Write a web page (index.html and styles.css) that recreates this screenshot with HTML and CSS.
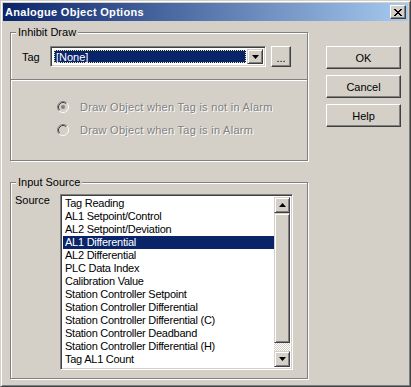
FILE: index.html
```html
<!DOCTYPE html>
<html>
  <head>
    <title>Analogue Object Options</title>
    <link rel="stylesheet" href="styles.css">
  </head>
  <body>
    <div class="window">
      <div class="titlebar">
        <span class="title">Analogue Object Options</span>
        <span class="close-btn">
          <svg width="8" height="7" viewBox="0 0 8 7"><path d="M0 0 L7 7 M1 0 L8 7 M7 0 L0 7 M8 0 L1 7" stroke="#000" stroke-width="1" shape-rendering="crispEdges"/></svg>
        </span>
      </div>

      <div class="dialog">
        <div class="main">
          <!-- Inhibit Draw group -->
          <div class="group group-inhibit">
            <span class="group-label">Inhibit Draw</span>
            <div class="tag-row">
              <span class="tag-label">Tag</span>
              <div class="combo sunken">
                <div class="combo-field"><span class="combo-text">[None]</span></div>
                <div class="combo-arrow raised-alt">
                  <svg width="7" height="4" viewBox="0 0 7 4"><path d="M0 0 H7 L3.5 4 Z" fill="#000"/></svg>
                </div>
              </div>
              <button class="btn btn-browse">...</button>
            </div>
            <div class="separator"></div>
            <div class="radios">
              <div class="radio-row">
                <svg class="radio" width="12" height="12" viewBox="0 0 12 12">
                  <circle cx="6" cy="6" r="4.5" fill="#D4D0C8"/>
                  <path d="M2.11 9.89 A5.5 5.5 0 0 1 9.89 2.11" stroke="#808080" fill="none"/>
                  <path d="M9.89 2.11 A5.5 5.5 0 0 1 2.11 9.89" stroke="#fff" fill="none"/>
                  <path d="M2.82 9.18 A4.5 4.5 0 0 1 9.18 2.82" stroke="#404040" fill="none"/>
                  <path d="M9.18 2.82 A4.5 4.5 0 0 1 2.82 9.18" stroke="#D4D0C8" fill="none"/>
                  <circle cx="6" cy="6" r="2" fill="#808080"/>
                </svg>
                <span>Draw Object when Tag is not in Alarm</span>
              </div>
              <div class="radio-row">
                <svg class="radio" width="12" height="12" viewBox="0 0 12 12">
                  <circle cx="6" cy="6" r="4.5" fill="#D4D0C8"/>
                  <path d="M2.11 9.89 A5.5 5.5 0 0 1 9.89 2.11" stroke="#808080" fill="none"/>
                  <path d="M9.89 2.11 A5.5 5.5 0 0 1 2.11 9.89" stroke="#fff" fill="none"/>
                  <path d="M2.82 9.18 A4.5 4.5 0 0 1 9.18 2.82" stroke="#404040" fill="none"/>
                  <path d="M9.18 2.82 A4.5 4.5 0 0 1 2.82 9.18" stroke="#D4D0C8" fill="none"/>
                </svg>
                <span>Draw Object when Tag is in Alarm</span>
              </div>
            </div>
          </div>

          <!-- Input Source group -->
          <div class="group group-source">
            <span class="group-label">Input Source</span>
            <div class="source-row">
              <span class="source-label">Source</span>
              <div class="listbox sunken">
                <ul class="list-items">
                  <li>Tag Reading</li>
                  <li>AL1 Setpoint/Control</li>
                  <li>AL2 Setpoint/Deviation</li>
                  <li class="selected">AL1 Differential</li>
                  <li>AL2 Differential</li>
                  <li>PLC Data Index</li>
                  <li>Calibration Value</li>
                  <li>Station Controller Setpoint</li>
                  <li>Station Controller Differential</li>
                  <li>Station Controller Differential (C)</li>
                  <li>Station Controller Deadband</li>
                  <li>Station Controller Differential (H)</li>
                  <li>Tag AL1 Count</li>
                  <li>Tag AL2 Count</li>
                </ul>
                <div class="scrollbar">
                  <div class="sb-btn raised-alt">
                    <svg width="7" height="4" viewBox="0 0 7 4"><path d="M0 4 H7 L3.5 0 Z" fill="#000"/></svg>
                  </div>
                  <div class="sb-thumb raised-alt"></div>
                  <div class="sb-track"></div>
                  <div class="sb-btn raised-alt">
                    <svg width="7" height="4" viewBox="0 0 7 4"><path d="M0 0 H7 L3.5 4 Z" fill="#000"/></svg>
                  </div>
                </div>
              </div>
            </div>
          </div>
        </div>

        <div class="actions">
          <button class="btn btn-push">OK</button>
          <button class="btn btn-push">Cancel</button>
          <button class="btn btn-push">Help</button>
        </div>
      </div>
    </div>
  </body>
</html>
```

FILE: styles.css
```css
body {
  margin: 0;
  padding: 0;
  background: #d4d0c8;
}

.window {
  width: 411px;
  height: 387px;
  box-sizing: border-box;
  padding: 2px;
  border: 1px solid;
  border-color: #d4d0c8 #404040 #404040 #d4d0c8;
  box-shadow: inset 1px 1px #fff, inset -1px -1px #808080;
  background: #d4d0c8;
  font-family: "Liberation Sans", Arial, sans-serif;
  font-size: 11px;
  color: #000;
}

/* title bar */
.titlebar {
  height: 18px;
  display: flex;
  align-items: center;
  justify-content: space-between;
  padding: 0 2px;
  background: linear-gradient(to right, #0a246a, #a6caf0);
}

.title {
  color: #fff;
  font-weight: bold;
  font-size: 11px;
  letter-spacing: 0.3px;
}

.close-btn {
  width: 16px;
  height: 14px;
  box-sizing: border-box;
  display: flex;
  align-items: center;
  justify-content: center;
  background: #d4d0c8;
  border: 1px solid;
  border-color: #fff #404040 #404040 #fff;
  box-shadow: inset -1px -1px #808080;
}

/* 3d borders */
.raised-alt {
  box-sizing: border-box;
  background: #d4d0c8;
  border: 1px solid;
  border-color: #d4d0c8 #404040 #404040 #d4d0c8;
  box-shadow: inset 1px 1px #fff, inset -1px -1px #808080;
}

.sunken {
  box-sizing: border-box;
  border: 1px solid;
  border-color: #808080 #fff #fff #808080;
  box-shadow: inset 1px 1px #404040, inset -1px -1px #d4d0c8;
  background: #fff;
}

.btn {
  box-sizing: border-box;
  margin: 0;
  padding: 0;
  background: #d4d0c8;
  border: 1px solid;
  border-color: #fff #404040 #404040 #fff;
  box-shadow: inset -1px -1px #808080;
  font-family: "Liberation Sans", Arial, sans-serif;
  font-size: 11px;
  color: #000;
}

/* layout */
.dialog {
  display: flex;
  padding: 11px 0 0 7px;
}

.main {
  display: flex;
  flex-direction: column;
  gap: 21px;
}

.group {
  position: relative;
  box-sizing: border-box;
  width: 298px;
  border: 1px solid #808080;
  box-shadow: inset 1px 1px #fff, 1px 1px #fff;
}

.group-inhibit {
  height: 129px;
}

.group-source {
  height: 197px;
}

.group-label {
  position: absolute;
  top: -7px;
  left: 5px;
  padding: 0 2px;
  line-height: 13px;
  background: #d4d0c8;
}

/* tag row */
.tag-row {
  display: flex;
  align-items: center;
  margin-top: 13px;
}

.tag-label {
  width: 28px;
  margin-left: 11px;
}

.combo {
  width: 216px;
  height: 21px;
  display: flex;
  padding: 2px;
}

.combo-field {
  flex: 1;
  padding: 1px;
}

.combo-field .combo-text {
  display: block;
  height: 100%;
  box-sizing: border-box;
  background: #0a246a;
  border: 1px dotted #f0e8a0;
  color: #fff;
  line-height: 13px;
  padding-left: 1px;
}

.combo-arrow {
  width: 16px;
  display: flex;
  align-items: center;
  justify-content: center;
}

.btn-browse {
  width: 20px;
  height: 21px;
  margin-left: 5px;
  line-height: 14px;
  padding-top: 3px;
}

.separator {
  margin-top: 12px;
  border-top: 1px solid #808080;
  border-bottom: 1px solid #fff;
}

/* radios */
.radios {
  display: flex;
  flex-direction: column;
  gap: 10px;
  margin-top: 19px;
  padding-left: 46px;
}

.radio-row {
  display: flex;
  align-items: center;
  height: 13px;
  color: #808080;
  text-shadow: 1px 1px 0 #fff;
  letter-spacing: 0.28px;
}

.radio {
  margin-right: 11px;
}

/* source list */
.source-row {
  display: flex;
  align-items: flex-start;
  margin-top: 11px;
}

.source-label {
  width: 45px;
  margin-left: 4px;
  line-height: 13px;
}

.listbox {
  width: 233px;
  height: 176px;
  padding: 2px;
  display: flex;
  overflow: hidden;
}

.list-items {
  flex: 1;
  margin: 0;
  padding: 0;
  list-style: none;
  overflow: hidden;
}

.list-items li {
  height: 13px;
  line-height: 13px;
  padding-left: 2px;
  white-space: nowrap;
  letter-spacing: -0.25px;
}

.list-items li.selected {
  background: #0a246a;
  color: #fff;
}

.scrollbar {
  width: 16px;
  display: flex;
  flex-direction: column;
}

.sb-btn {
  height: 16px;
  display: flex;
  align-items: center;
  justify-content: center;
}

.sb-thumb {
  height: 130px;
}

.sb-track {
  flex: 1;
  background: repeating-conic-gradient(#d4d0c8 0 25%, #fff 0 50%) 0 0 / 2px 2px;
}

/* dialog buttons */
.actions {
  display: flex;
  flex-direction: column;
  gap: 6px;
  margin-top: 14px;
  margin-left: 18px;
}

.btn-push {
  width: 75px;
  height: 23px;
}
```
